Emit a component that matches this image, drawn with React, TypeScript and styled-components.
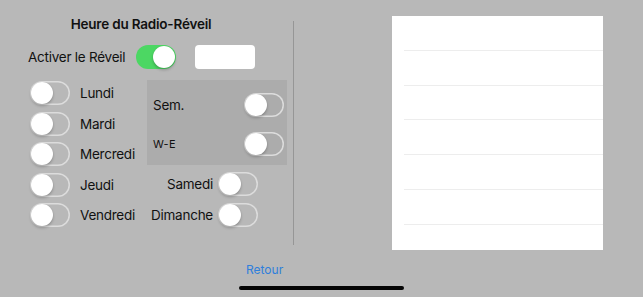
import React from "react";
import styled, { createGlobalStyle } from "styled-components";

const Global = createGlobalStyle`
  html, body { margin: 0; padding: 0; background: #b8b8b8; }
  body { font-family: Inter, "Liberation Sans", Arial, sans-serif; color: #111; }
  * { box-sizing: border-box; }
`;

const Page = styled.div`
  position: relative;
  width: 643px;
  height: 297px;
  background: #b8b8b8;
  overflow: hidden;
  display: flex;
  flex-direction: column;
`;

const Main = styled.div`
  display: flex;
  height: 256px;
`;

const LeftPanel = styled.div`
  width: 293px;
  display: flex;
  flex-direction: column;
`;

const Title = styled.div`
  margin-top: 16px;
  width: 282px;
  text-align: center;
  font-size: 13.5px;
  font-weight: 600;
  line-height: 17px;
  letter-spacing: -0.2px;
`;

const ActiveRow = styled.div`
  display: flex;
  align-items: center;
  margin-top: 12px;
  padding-left: 28px;
  height: 24px;
`;

const Label = styled.span<{ $small?: boolean }>`
  font-size: ${(p) => (p.$small ? "11px" : "13.5px")};
  line-height: 16px;
  white-space: nowrap;
  letter-spacing: ${(p) => (p.$small ? "0.3px" : "-0.25px")};
`;

const ActiveLabel = styled(Label)`
  width: 108px;
`;

const TimeBox = styled.div`
  width: 60px;
  height: 24px;
  margin-left: 19px;
  background: #fff;
  border-radius: 4px;
`;

const Columns = styled.div`
  display: flex;
  margin-top: 11px;
`;

const DayColumn = styled.div`
  width: 147px;
  padding-left: 30px;
  padding-top: 1px;
  display: flex;
  flex-direction: column;
  gap: 6.5px;
`;

const DayRow = styled.div`
  display: flex;
  align-items: center;
  gap: 10px;
  height: 24px;
`;

const RightColumn = styled.div`
  display: flex;
  flex-direction: column;
`;

const GroupBox = styled.div`
  width: 140px;
  height: 85px;
  background: #acacac;
  padding: 13px 3px 0 6px;
  display: flex;
  flex-direction: column;
  gap: 15px;
`;

const GroupRow = styled.div`
  display: flex;
  align-items: center;
  justify-content: space-between;
  height: 24px;
`;

const WeekendRows = styled.div`
  margin-top: 7px;
  display: flex;
  flex-direction: column;
  gap: 7px;
`;

const WeekendRow = styled.div`
  display: grid;
  grid-template-columns: 60px 40px;
  column-gap: 5px;
  align-items: center;
  height: 24px;
  padding-left: 6px;
  & > span { justify-self: end; }
`;

const Divider = styled.div`
  width: 1px;
  margin-top: 21px;
  height: 224px;
  background: #969696;
`;

const RightArea = styled.div`
  flex: 1;
  padding-top: 16px;
  padding-left: 98px;
`;

const Table = styled.div`
  width: 211px;
  height: 234px;
  background: #fff;
  display: flex;
  flex-direction: column;
`;

const Cell = styled.div`
  height: 34.8px;
  margin-left: 12px;
  border-bottom: 1px solid #ededed;
  flex-shrink: 0;
`;

const Footer = styled.div`
  padding-left: 246px;
`;

const BackButton = styled.button`
  border: 0;
  background: transparent;
  padding: 0;
  margin-top: 6px;
  font-family: inherit;
  font-size: 12px;
  line-height: 15px;
  color: #2f7fdc;
  cursor: pointer;
`;

const HomeIndicator = styled.div`
  position: absolute;
  left: 239px;
  top: 286px;
  width: 165px;
  height: 4px;
  border-radius: 2px;
  background: #050505;
`;

const Track = styled.div<{ $on?: boolean }>`
  position: relative;
  width: 40px;
  height: 24px;
  flex-shrink: 0;
  border-radius: 12px;
  background: ${(p) => (p.$on ? "#4cd763" : "transparent")};
  box-shadow: ${(p) => (p.$on ? "none" : "inset 0 0 0 1.5px #dcdcdc")};
`;

const Knob = styled.div<{ $on?: boolean }>`
  position: absolute;
  top: 1px;
  left: ${(p) => (p.$on ? "17px" : "1px")};
  width: 22px;
  height: 22px;
  border-radius: 50%;
  background: #fff;
  box-shadow: 0 2px 3px rgba(0, 0, 0, 0.22), 0 0 1px rgba(0, 0, 0, 0.15);
`;

const Switch = ({ on }: { on?: boolean }) => (
  <Track $on={on}>
    <Knob $on={on} />
  </Track>
);

const days = ["Lundi", "Mardi", "Mercredi", "Jeudi", "Vendredi"];

export default function App() {
  return (
    <Page>
      <Global />
      <Main>
        <LeftPanel>
          <Title>Heure du Radio-Réveil</Title>
          <ActiveRow>
            <ActiveLabel>Activer le Réveil</ActiveLabel>
            <Switch on />
            <TimeBox />
          </ActiveRow>
          <Columns>
            <DayColumn>
              {days.map((d) => (
                <DayRow key={d}>
                  <Switch />
                  <Label>{d}</Label>
                </DayRow>
              ))}
            </DayColumn>
            <RightColumn>
              <GroupBox>
                <GroupRow>
                  <Label>Sem.</Label>
                  <Switch />
                </GroupRow>
                <GroupRow>
                  <Label $small>W-E</Label>
                  <Switch />
                </GroupRow>
              </GroupBox>
              <WeekendRows>
                <WeekendRow>
                  <Label>Samedi</Label>
                  <Switch />
                </WeekendRow>
                <WeekendRow>
                  <Label>Dimanche</Label>
                  <Switch />
                </WeekendRow>
              </WeekendRows>
            </RightColumn>
          </Columns>
        </LeftPanel>
        <Divider />
        <RightArea>
          <Table>
            {[0, 1, 2, 3, 4, 5].map((i) => (
              <Cell key={i} />
            ))}
          </Table>
        </RightArea>
      </Main>
      <Footer>
        <BackButton>Retour</BackButton>
      </Footer>
      <HomeIndicator />
    </Page>
  );
}
